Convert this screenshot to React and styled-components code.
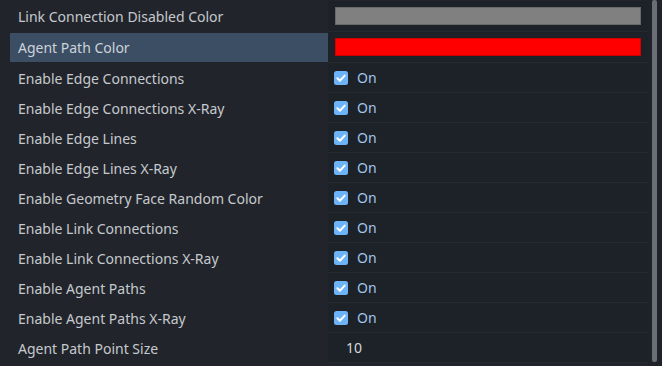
import React from 'react';
import styled, { createGlobalStyle } from 'styled-components';

const GlobalStyle = createGlobalStyle`
  html, body {
    margin: 0;
    padding: 0;
    background: #21252b;
  }
  body {
    font-family: "Noto Sans", "DejaVu Sans", sans-serif;
    font-size: 14px;
  }
  * {
    box-sizing: border-box;
  }
`;

const properties = [
  { label: 'Link Connection Disabled Color', type: 'color', value: '#808080' },
  { label: 'Agent Path Color', type: 'color', value: '#ff0000', selected: true },
  { label: 'Enable Edge Connections', type: 'bool' },
  { label: 'Enable Edge Connections X-Ray', type: 'bool' },
  { label: 'Enable Edge Lines', type: 'bool' },
  { label: 'Enable Edge Lines X-Ray', type: 'bool' },
  { label: 'Enable Geometry Face Random Color', type: 'bool' },
  { label: 'Enable Link Connections', type: 'bool' },
  { label: 'Enable Link Connections X-Ray', type: 'bool' },
  { label: 'Enable Agent Paths', type: 'bool' },
  { label: 'Enable Agent Paths X-Ray', type: 'bool' },
  { label: 'Agent Path Point Size', type: 'number', value: 10 },
];

function CheckIcon() {
  return (
    <svg width="14" height="14" viewBox="0 0 14 14">
      <rect x="0" y="0" width="14" height="14" rx="2.5" fill="#6cb4f7" />
      <path
        d="M3.4 7.3 L5.9 9.7 L10.7 4.6"
        fill="none"
        stroke="#ffffff"
        strokeWidth="2"
        strokeLinecap="round"
        strokeLinejoin="round"
      />
    </svg>
  );
}

function Editor({ prop }) {
  if (prop.type === 'color') {
    return <Swatch $color={prop.value} />;
  }
  if (prop.type === 'bool') {
    return (
      <Toggle>
        <CheckIcon />
        <span>On</span>
      </Toggle>
    );
  }
  return <NumberValue>{prop.value}</NumberValue>;
}

export default function App() {
  return (
    <>
      <GlobalStyle />
      <Panel>
        <List>
          {properties.map((prop) => (
            <Row key={prop.label} $tall={prop.type === 'color'}>
              <Label $selected={prop.selected}>{prop.label}</Label>
              <Value>
                <Editor prop={prop} />
              </Value>
            </Row>
          ))}
        </List>
        <Scrollbar>
          <Thumb />
        </Scrollbar>
      </Panel>
    </>
  );
}

const Panel = styled.div`
  display: flex;
  width: 662px;
  height: 366px;
  overflow: hidden;
  background: #21252b;
`;

const List = styled.div`
  flex: 1;
  display: flex;
  flex-direction: column;
  padding-top: 1px;
`;

// color pickers make their rows one pixel taller
const Row = styled.div`
  display: flex;
  flex-shrink: 0;
  height: ${(p) => (p.$tall ? '31px' : '30px')};
  padding-left: 10px;
`;

const Label = styled.div`
  width: 318px;
  padding-left: 8px;
  display: flex;
  align-items: center;
  color: ${(p) => (p.$selected ? '#cdd3da' : '#c6c9ce')};
  background: ${(p) => (p.$selected ? '#3b4e64' : 'transparent')};
  margin: ${(p) => (p.$selected ? '1px 0' : '0')};
  white-space: nowrap;
`;

const Value = styled.div`
  flex: 1;
  display: flex;
  align-items: center;
  padding: 0 7px 0 6px;
  background: #1d2128;
  border-bottom: 1px solid #252a31;
`;

const Swatch = styled.div`
  flex: 1;
  height: 18px;
  margin-left: 1px;
  background: ${(p) => p.$color};
  box-shadow: inset 0 0 0 1px rgba(0, 0, 0, 0.18);
`;

const Toggle = styled.div`
  display: flex;
  align-items: center;
  gap: 9px;
  color: #a2c6ec;

  svg {
    flex-shrink: 0;
  }
`;

const NumberValue = styled.div`
  padding-left: 12px;
  color: #d6d9dd;
`;

const Scrollbar = styled.div`
  width: 14px;
  display: flex;
  justify-content: center;
  padding: 0 1px 4px 0;
  background: #1f2329;
`;

const Thumb = styled.div`
  width: 5px;
  height: 100%;
  border-radius: 2px;
  background: #6a6e75;
`;
